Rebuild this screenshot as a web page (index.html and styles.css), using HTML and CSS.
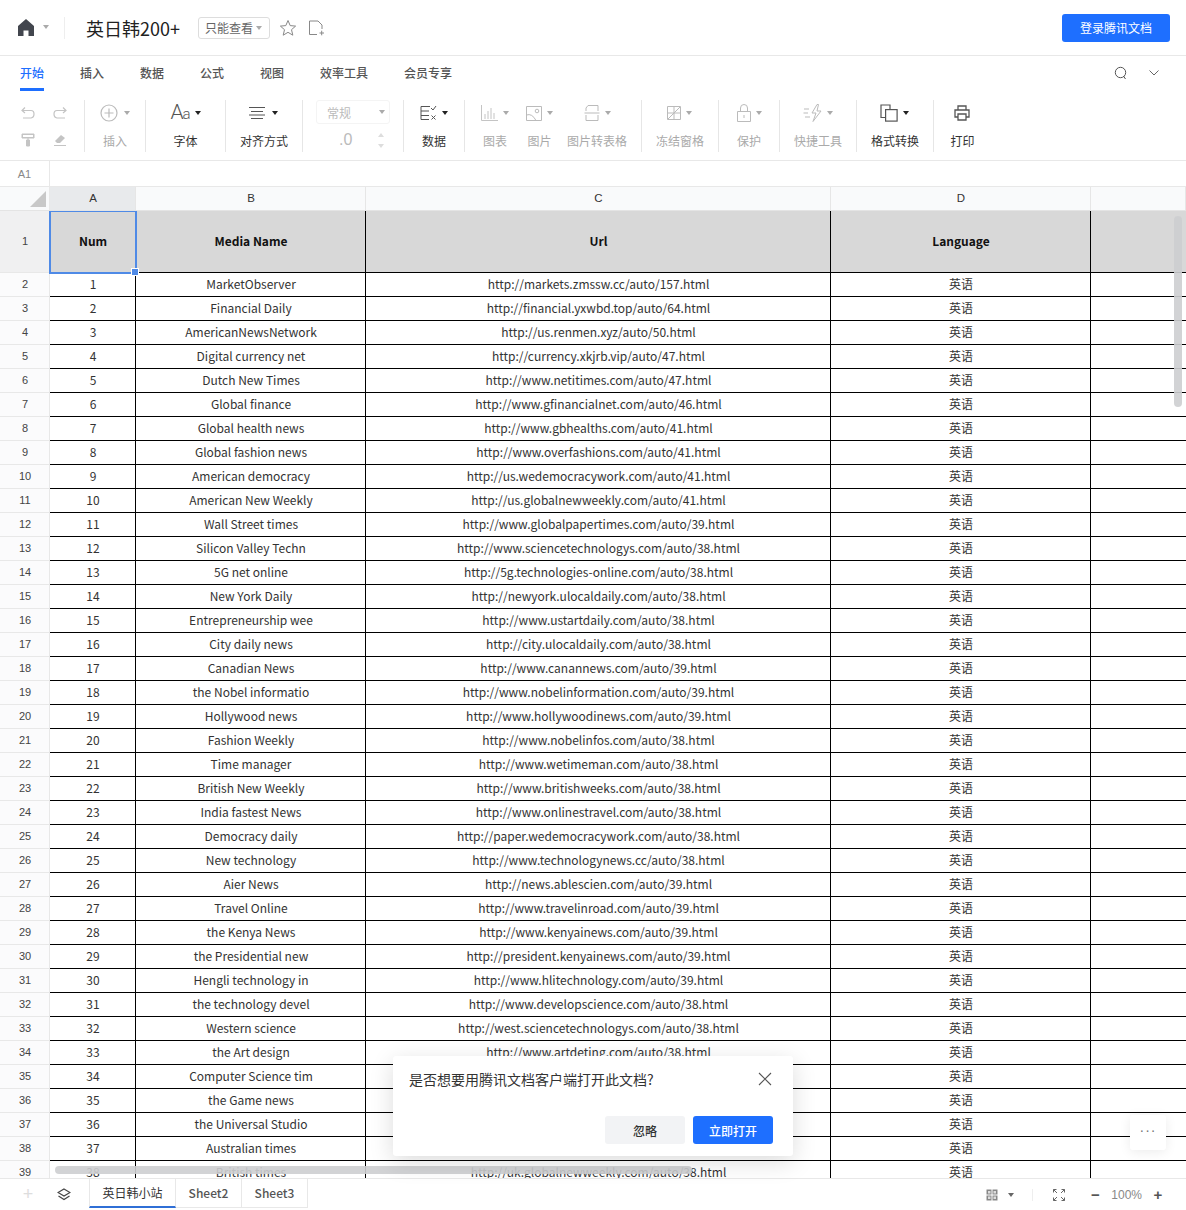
FILE: index.html
```html
<!DOCTYPE html>
<html lang="zh">
<head>
<meta charset="utf-8">
<title>英日韩200+</title>
<link rel="stylesheet" href="styles.css">
</head>
<body>
<div class="app">
  <header class="topbar">
    <svg class="home" width="16" height="17" viewBox="0 0 16 17"><path d="M8 0 L16 7 V17 H10.5 V11.5 H5.5 V17 H0 V7 Z" fill="#42464e"/></svg>
    <span class="caret caret-grey home-caret"></span>
    <span class="vsep"></span>
    <h1 class="title">英日韩200+</h1>
    <span class="badge">只能查看<span class="caret caret-grey"></span></span>
    <svg class="star" width="18" height="18" viewBox="0 0 18 18"><path d="M9 1.5 L11.2 6.6 L16.6 7.1 L12.5 10.7 L13.8 16.2 L9 13.3 L4.2 16.2 L5.5 10.7 L1.4 7.1 L6.8 6.6 Z" fill="none" stroke="#888" stroke-width="1"/></svg>
    <svg class="doc" width="17" height="16" viewBox="0 0 17 16"><path d="M9 14.5 H1.5 V1 H10 L14 5 V9 M11.5 13 H16 M13.7 10.7 V15.3" fill="none" stroke="#888" stroke-width="1"/></svg>
    <button class="login">登录腾讯文档</button>
  </header>

  <nav class="tabs">
    <span class="tab active">开始</span>
    <span class="tab">插入</span>
    <span class="tab">数据</span>
    <span class="tab">公式</span>
    <span class="tab">视图</span>
    <span class="tab">效率工具</span>
    <span class="tab">会员专享</span>
    <span class="tabs-right">
      <svg width="14" height="14" viewBox="0 0 14 14"><circle cx="6.5" cy="6.5" r="5.2" fill="none" stroke="#555" stroke-width="1"/><path d="M9.5 10 L11.5 13" stroke="#555" stroke-width="1"/></svg>
      <svg width="10" height="6" viewBox="0 0 10 6"><path d="M.5 .5 L5 5 L9.5 .5" fill="none" stroke="#666" stroke-width="1"/></svg>
    </span>
  </nav>

  <section class="toolbar">
    <div class="grp g-history">
      <svg width="14" height="12" viewBox="0 0 14 12"><path d="M4 .5 L1 3.5 L4 6 M1 3.5 H10 Q13 3.5 13 7 T10 11 H2" fill="none" stroke="#c4c4c4" stroke-width="1.2"/></svg>
      <svg width="14" height="12" viewBox="0 0 14 12"><path d="M10 .5 L13 3.5 L10 6 M13 3.5 H4 Q1 3.5 1 7 T4 11 H12" fill="none" stroke="#c4c4c4" stroke-width="1.2"/></svg>
      <svg width="14" height="14" viewBox="0 0 14 14"><path d="M1 1 H13 V5 H1 Z M7 5 V7 M5.5 7 H8.500 V13 H5.500 Z" fill="#c4c4c4" stroke="#c4c4c4"/><rect x="2" y="2" width="10" height="2" fill="#fff"/></svg>
      <svg width="14" height="14" viewBox="0 0 14 14"><path d="M2 8 L8 2 L12 5 L7 10 H4 Z" fill="#c4c4c4"/><path d="M1 12.500 H13" stroke="#c4c4c4"/></svg>
    </div>
    <div class="grp g-insert">
      <div class="tool off">
        <div class="ico gap6"><svg width="18" height="18" viewBox="0 0 18 18"><circle cx="9" cy="9" r="8" fill="none" stroke="#bbb" stroke-width="1.200"/><path d="M9 4.500 V13.500 M4.500 9 H13.500" stroke="#bbb" stroke-width="1.200"/></svg><span class="caret caret-grey"></span></div>
        <div class="lbl">插入</div>
      </div>
    </div>
    <div class="grp g-font">
      <div class="tool">
        <div class="ico"><span class="aa">A<small>a</small></span><span class="caret caret-dark"></span></div>
        <div class="lbl">字体</div>
      </div>
    </div>
    <div class="grp g-align">
      <div class="tool">
        <div class="ico gap7"><svg width="16" height="14" viewBox="0 0 16 14"><path d="M0 1.500 H16 M2 5.500 H14 M0 9 H16 M2 12.500 H14" stroke="#555" stroke-width="1"/></svg><span class="caret caret-dark"></span></div>
        <div class="lbl">对齐方式</div>
      </div>
    </div>
    <div class="grp g-format">
      <div class="select">常规<span class="caret caret-grey"></span></div>
      <div class="decimal"><span class="dot0">.0</span><span class="stepper"><i></i><i></i></span></div>
    </div>
    <div class="grp g-data">
      <div class="tool">
        <div class="ico"><svg width="17" height="16" viewBox="0 0 17 16"><path d="M10 1.500 H1 V14.500 H9 M1 6 H9 M1 10.500 H9" fill="none" stroke="#555" stroke-width="1"/><path d="M11 3 L13 5 L16 1 M11.500 10.500 L15.500 14.500 M15.500 10.500 L11.500 14.500" fill="none" stroke="#555" stroke-width="1"/></svg><span class="caret caret-dark"></span></div>
        <div class="lbl">数据</div>
      </div>
    </div>
    <div class="grp g-media">
      <div class="tool off">
        <div class="ico"><svg width="17" height="16" viewBox="0 0 17 16"><path d="M.5 0 V15.500 H17 M4 14 V9 M7 14 V6 M10 14 V3 M13 14 V8" fill="none" stroke="#c4c4c4" stroke-width="1"/></svg><span class="caret caret-grey"></span></div>
        <div class="lbl">图表</div>
      </div>
      <div class="tool off">
        <div class="ico"><svg width="16" height="15" viewBox="0 0 16 15"><path d="M.5 .5 H15.500 V14.500 H.5 Z M.5 9 Q6 7 10 14.500" fill="none" stroke="#bbb" stroke-width="1"/><circle cx="11" cy="5" r="1.800" fill="none" stroke="#bbb"/></svg><span class="caret caret-grey"></span></div>
        <div class="lbl">图片</div>
      </div>
      <div class="tool off tight">
        <div class="ico"><svg width="16" height="16" viewBox="0 0 16 16"><path d="M2 6 V3 L4 .5 H14 V6 M.5 8 H15.500 M2 10 V15.500 H14 V10" fill="none" stroke="#bbb" stroke-width="1"/></svg><span class="caret caret-grey"></span></div>
        <div class="lbl">图片转表格</div>
      </div>
    </div>
    <div class="grp g-freeze">
      <div class="tool off">
        <div class="ico"><svg width="14" height="14" viewBox="0 0 14 14"><path d="M.5 .5 H13.500 V13.500 H.5 Z M7 .5 V13.500 M.5 7 H13.500 M1 13 L13 1" fill="none" stroke="#bbb" stroke-width="1"/></svg><span class="caret caret-grey"></span></div>
        <div class="lbl">冻结窗格</div>
      </div>
    </div>
    <div class="grp g-protect">
      <div class="tool off">
        <div class="ico"><svg width="14" height="18" viewBox="0 0 14 18"><path d="M.5 7.500 H13.500 V17.500 H.5 Z M3.500 7.500 V4 Q3.500 .5 7 .5 T10.500 4 V7.500 M7 11 V14" fill="none" stroke="#bbb" stroke-width="1"/></svg><span class="caret caret-grey"></span></div>
        <div class="lbl">保护</div>
      </div>
    </div>
    <div class="grp g-quick">
      <div class="tool off">
        <div class="ico"><svg width="19" height="18" viewBox="0 0 19 18"><path d="M14 .5 L9 9 H13 L10 17.500 L18 7 H14 L15.500 .5 Z M1 5 H6 M.5 9 H5 M2 13 H7" fill="none" stroke="#bbb" stroke-width="1"/></svg><span class="caret caret-grey"></span></div>
        <div class="lbl">快捷工具</div>
      </div>
    </div>
    <div class="grp g-convert">
      <div class="tool">
        <div class="ico"><svg width="18" height="18" viewBox="0 0 18 18"><path d="M5.500 13.500 H1 V1 H10 V5.500" fill="none" stroke="#555" stroke-width="1.200"/><rect x="5.600" y="5.600" width="11.500" height="11.500" fill="none" stroke="#555" stroke-width="1.200"/></svg><span class="caret caret-dark"></span></div>
        <div class="lbl">格式转换</div>
      </div>
    </div>
    <div class="grp g-print">
      <div class="tool">
        <div class="ico"><svg width="16" height="16" viewBox="0 0 16 16"><path d="M4 5 V1 H12 V5 M4 12 H1 V5 H15 V12 H12 M4 9 H12 V15 H4 Z" fill="none" stroke="#555" stroke-width="1.300"/></svg></div>
        <div class="lbl">打印</div>
      </div>
    </div>
  </section>

  <div class="formula"><span class="cellref">A1</span></div>

  <main class="sheet">
    <div class="colhead">
      <div class="corner"><span class="tri"></span></div>
      <div class="ch sel">A</div><div class="ch">B</div><div class="ch">C</div><div class="ch">D</div><div class="ch"></div>
    </div>
    <div class="body">
      <div class="row head"><div class="rh sel">1</div><div>Num</div><div>Media Name</div><div>Url</div><div>Language</div><div></div></div>
      <div class="row"><div class="rh">2</div><div>1</div><div>MarketObserver</div><div>http://markets.zmssw.cc/auto/157.html</div><div>英语</div><div></div></div>
      <div class="row"><div class="rh">3</div><div>2</div><div>Financial Daily</div><div>http://financial.yxwbd.top/auto/64.html</div><div>英语</div><div></div></div>
      <div class="row"><div class="rh">4</div><div>3</div><div>AmericanNewsNetwork</div><div>http://us.renmen.xyz/auto/50.html</div><div>英语</div><div></div></div>
      <div class="row"><div class="rh">5</div><div>4</div><div>Digital currency net</div><div>http://currency.xkjrb.vip/auto/47.html</div><div>英语</div><div></div></div>
      <div class="row"><div class="rh">6</div><div>5</div><div>Dutch New Times</div><div>http://www.netitimes.com/auto/47.html</div><div>英语</div><div></div></div>
      <div class="row"><div class="rh">7</div><div>6</div><div>Global finance</div><div>http://www.gfinancialnet.com/auto/46.html</div><div>英语</div><div></div></div>
      <div class="row"><div class="rh">8</div><div>7</div><div>Global health news</div><div>http://www.gbhealths.com/auto/41.html</div><div>英语</div><div></div></div>
      <div class="row"><div class="rh">9</div><div>8</div><div>Global fashion news</div><div>http://www.overfashions.com/auto/41.html</div><div>英语</div><div></div></div>
      <div class="row"><div class="rh">10</div><div>9</div><div>American democracy</div><div>http://us.wedemocracywork.com/auto/41.html</div><div>英语</div><div></div></div>
      <div class="row"><div class="rh">11</div><div>10</div><div>American New Weekly</div><div>http://us.globalnewweekly.com/auto/41.html</div><div>英语</div><div></div></div>
      <div class="row"><div class="rh">12</div><div>11</div><div>Wall Street times</div><div>http://www.globalpapertimes.com/auto/39.html</div><div>英语</div><div></div></div>
      <div class="row"><div class="rh">13</div><div>12</div><div>Silicon Valley Techn</div><div>http://www.sciencetechnologys.com/auto/38.html</div><div>英语</div><div></div></div>
      <div class="row"><div class="rh">14</div><div>13</div><div>5G net online</div><div>http://5g.technologies-online.com/auto/38.html</div><div>英语</div><div></div></div>
      <div class="row"><div class="rh">15</div><div>14</div><div>New York Daily</div><div>http://newyork.ulocaldaily.com/auto/38.html</div><div>英语</div><div></div></div>
      <div class="row"><div class="rh">16</div><div>15</div><div>Entrepreneurship wee</div><div>http://www.ustartdaily.com/auto/38.html</div><div>英语</div><div></div></div>
      <div class="row"><div class="rh">17</div><div>16</div><div>City daily news</div><div>http://city.ulocaldaily.com/auto/38.html</div><div>英语</div><div></div></div>
      <div class="row"><div class="rh">18</div><div>17</div><div>Canadian News</div><div>http://www.canannews.com/auto/39.html</div><div>英语</div><div></div></div>
      <div class="row"><div class="rh">19</div><div>18</div><div>the Nobel informatio</div><div>http://www.nobelinformation.com/auto/39.html</div><div>英语</div><div></div></div>
      <div class="row"><div class="rh">20</div><div>19</div><div>Hollywood news</div><div>http://www.hollywoodinews.com/auto/39.html</div><div>英语</div><div></div></div>
      <div class="row"><div class="rh">21</div><div>20</div><div>Fashion Weekly</div><div>http://www.nobelinfos.com/auto/38.html</div><div>英语</div><div></div></div>
      <div class="row"><div class="rh">22</div><div>21</div><div>Time manager</div><div>http://www.wetimeman.com/auto/38.html</div><div>英语</div><div></div></div>
      <div class="row"><div class="rh">23</div><div>22</div><div>British New Weekly</div><div>http://www.britishweeks.com/auto/38.html</div><div>英语</div><div></div></div>
      <div class="row"><div class="rh">24</div><div>23</div><div>India fastest News</div><div>http://www.onlinestravel.com/auto/38.html</div><div>英语</div><div></div></div>
      <div class="row"><div class="rh">25</div><div>24</div><div>Democracy daily</div><div>http://paper.wedemocracywork.com/auto/38.html</div><div>英语</div><div></div></div>
      <div class="row"><div class="rh">26</div><div>25</div><div>New technology</div><div>http://www.technologynews.cc/auto/38.html</div><div>英语</div><div></div></div>
      <div class="row"><div class="rh">27</div><div>26</div><div>Aier News</div><div>http://news.ablescien.com/auto/39.html</div><div>英语</div><div></div></div>
      <div class="row"><div class="rh">28</div><div>27</div><div>Travel Online</div><div>http://www.travelinroad.com/auto/39.html</div><div>英语</div><div></div></div>
      <div class="row"><div class="rh">29</div><div>28</div><div>the Kenya News</div><div>http://www.kenyainews.com/auto/39.html</div><div>英语</div><div></div></div>
      <div class="row"><div class="rh">30</div><div>29</div><div>the Presidential new</div><div>http://president.kenyainews.com/auto/39.html</div><div>英语</div><div></div></div>
      <div class="row"><div class="rh">31</div><div>30</div><div>Hengli technology in</div><div>http://www.hlitechnology.com/auto/39.html</div><div>英语</div><div></div></div>
      <div class="row"><div class="rh">32</div><div>31</div><div>the technology devel</div><div>http://www.developscience.com/auto/38.html</div><div>英语</div><div></div></div>
      <div class="row"><div class="rh">33</div><div>32</div><div>Western science</div><div>http://west.sciencetechnologys.com/auto/38.html</div><div>英语</div><div></div></div>
      <div class="row"><div class="rh">34</div><div>33</div><div>the Art design</div><div>http://www.artdeting.com/auto/38.html</div><div>英语</div><div></div></div>
      <div class="row"><div class="rh">35</div><div>34</div><div>Computer Science tim</div><div></div><div>英语</div><div></div></div>
      <div class="row"><div class="rh">36</div><div>35</div><div>the Game news</div><div></div><div>英语</div><div></div></div>
      <div class="row"><div class="rh">37</div><div>36</div><div>the Universal Studio</div><div></div><div>英语</div><div></div></div>
      <div class="row"><div class="rh">38</div><div>37</div><div>Australian times</div><div></div><div>英语</div><div></div></div>
      <div class="row"><div class="rh">39</div><div>38</div><div>British times</div><div>http://uk.globalnewweekly.com/auto/38.html</div><div>英语</div><div></div></div>
      <span class="selection"><i class="handle"></i></span>
      <span class="vscroll"></span>
      <span class="hscroll"></span>
    </div>
  </main>

  <footer class="bottom">
    <span class="add">+</span>
    <svg class="layers" width="14" height="13" viewBox="0 0 14 13"><path d="M7 1 L13 4.500 L7 8 L1 4.500 Z M1.500 8 L7 11.500 L12.500 8" fill="none" stroke="#444" stroke-width="1.200"/></svg>
    <div class="sheets">
      <span class="stab on">英日韩小站</span>
      <span class="stab">Sheet2</span>
      <span class="stab">Sheet3</span>
    </div>
    <div class="bright">
      <svg width="12" height="12" viewBox="0 0 12 12"><path d="M.5 .5 H11.500 V11.500 H.5 Z" fill="#888"/><path d="M6 0 V12 M0 6 H12" stroke="#fff" stroke-width="1"/><path d="M2 2 H4.500 V4.500 H2 Z M7.500 2 H10 V4.500 H7.500 Z M2 7.500 H4.500 V10 H2 Z M7.500 7.500 H10 V10 H7.500 Z" fill="#ddd"/></svg>
      <span class="caret caret-dim"></span>
      <span class="bsep"></span>
      <svg class="full" width="12" height="12" viewBox="0 0 12 12"><path d="M.5 3.500 V.5 H3.500 M.5 .5 L4 4 M8.500 .5 H11.500 V3.500 M11.500 .5 L8 4 M.5 8.500 V11.500 H3.500 M.5 11.500 L4 8 M8.500 11.500 H11.500 V8.500 M11.500 11.500 L8 8" fill="none" stroke="#666" stroke-width="1"/></svg>
      <span class="zm">−</span>
      <span class="pct">100%</span>
      <span class="zm">+</span>
    </div>
  </footer>

  <aside class="dialog">
    <div class="dlg-top">
      <span>是否想要用腾讯文档客户端打开此文档?</span>
      <svg width="14" height="14" viewBox="0 0 14 14"><path d="M1 1 L13 13 M13 1 L1 13" stroke="#555" stroke-width="1.100"/></svg>
    </div>
    <div class="dlg-actions">
      <button class="btn ghost">忽略</button>
      <button class="btn primary">立即打开</button>
    </div>
  </aside>
  <div class="more">···</div>
</div>
</body>
</html>
```
FILE: styles.css
```css
* { box-sizing: border-box; }
html, body { margin: 0; padding: 0; background: #fff; }
body { font-family: "Noto Sans CJK SC", "Noto Sans", sans-serif; color: #333; }
.app { position: relative; width: 1186px; height: 1210px; overflow: hidden; display: flex; flex-direction: column; }

.caret { display: inline-block; width: 0; height: 0; border-left: 3px solid transparent; border-right: 3px solid transparent; border-top: 4px solid #999; }
.caret-grey { border-top-color: #aaa; }
.caret-dark { border-top-color: #222; }
.caret-dim { border-top-color: #666; }

.topbar { height: 56px; flex: none; display: flex; align-items: center; padding-left: 18px; border-bottom: 1px solid #e8e8e8; }
.home-caret { margin-left: 9px; margin-top: -1px; }
.vsep { width: 1px; height: 22px; background: #eee; margin-left: 15px; }
.title { margin: 0 0 0 21px; font-size: 18px; font-weight: 400; color: #222; width: 112px; line-height: 24px; white-space: nowrap; }
.badge { width: 72px; height: 22px; border: 1px solid #ddd; border-radius: 3px; font-size: 12px; color: #666; display: flex; align-items: center; padding-left: 6px; gap: 3px; }
.star { margin-left: 9px; }
.doc { margin-left: 11px; }
.login { margin-left: auto; margin-right: 16px; width: 108px; height: 28px; border: 0; border-radius: 3px; background: #1e6fff; color: #fff; font: 12px "Noto Sans CJK SC", sans-serif; padding: 0; }

.tabs { height: 36px; flex: none; display: flex; align-items: center; padding: 0 27px 2px 20px; gap: 36px; }
.tab { position: relative; font-size: 12px; font-weight: 500; color: #555; line-height: 18px; }
.tab.active { color: #1e6fff; }
.tab.active::after { content: ""; position: absolute; left: 0; right: 0; top: 24px; height: 3px; background: #1e6fff; }
.tabs-right { margin-left: auto; display: flex; align-items: center; gap: 21px; }

.toolbar { height: 69px; flex: none; display: flex; align-items: flex-start; padding-top: 8px; border-bottom: 1px solid #e8e8e8; }
.grp { height: 52px; flex: none; display: flex; justify-content: center; border-right: 1px solid #e6e6e6; }
.tool { display: flex; flex-direction: column; align-items: center; flex: none; }
.ico { height: 26px; display: flex; align-items: center; gap: 5px; }
.gap6 { gap: 6px; }
.gap7 { gap: 7px; }
.lbl { height: 24px; margin-top: 2px; line-height: 26px; font-size: 12px; color: #333; white-space: nowrap; }
.off .lbl { color: #aaa; }
.g-history { width: 85px; display: grid; grid-template-columns: 32px 32px; grid-template-rows: 26px 28px; justify-content: start; padding-left: 12px; align-items: center; justify-items: center; }
.g-insert { width: 61px; }
.g-font { width: 80px; }
.g-align { width: 77px; }
.g-format { width: 101px; display: block; padding-left: 13px; }
.g-data { width: 61px; }
.g-media { width: 177px; justify-content: flex-start; gap: 17px; padding-left: 16px; }
.tight { margin-left: -3px; }
.g-freeze { width: 77px; }
.g-protect { width: 61px; }
.g-quick { width: 77px; }
.g-convert { width: 77px; }
.g-print { width: 57px; border-right: 0; }
.aa { font-family: "Roboto", sans-serif; font-size: 21px; color: #555; font-weight: 300; line-height: 22px; letter-spacing: -1px; }
.aa small { font-size: 15px; }
.select { width: 74px; height: 24px; border: 1px solid #f4f4f4; border-radius: 3px; font-size: 12px; color: #bbb; display: flex; align-items: center; justify-content: space-between; padding: 0 4px 0 10px; }
.decimal { height: 28px; display: flex; align-items: center; margin-top: 2px; }
.dot0 { font-family: "Liberation Sans", sans-serif; font-size: 16px; color: #bbb; margin-left: 23px; width: 37px; }
.stepper { display: flex; flex-direction: column; gap: 7px; margin-left: 2px; }
.stepper i { display: block; width: 0; height: 0; border-left: 3px solid transparent; border-right: 3px solid transparent; }
.stepper i:first-child { border-bottom: 4px solid #ddd; }
.stepper i:last-child { border-top: 4px solid #ddd; }

.formula { height: 26px; flex: none; border-bottom: 1px solid #e8e8e8; display: flex; }
.cellref { width: 50px; border-right: 1px solid #e8e8e8; font: 11px/26px "Liberation Sans", sans-serif; color: #888; text-align: center; }

.sheet { flex: 1; min-height: 0; display: flex; flex-direction: column; }
.colhead, .row { display: grid; grid-template-columns: 50px 86px 230px 465px 260px 95px; }
.colhead { height: 24px; flex: none; background: #f9fafb; border-bottom: 1px solid #e4e4e4; }
.corner { position: relative; border-right: 1px solid #e8e8e8; }
.tri { position: absolute; right: 3px; bottom: 3px; width: 0; height: 0; border-left: 16px solid transparent; border-bottom: 16px solid #c8c8c8; }
.ch { padding-left: 1px; border-right: 1px solid #e6e6e6; font: 11.5px/23px "Liberation Sans", sans-serif; color: #333; text-align: center; }
.ch.sel { background: #e8eaec; }
.body { position: relative; flex: 1; min-height: 0; overflow: hidden; }
.row { height: 24px; font-size: 12px; color: #333; }
.row > div { padding-left: 1px; border-right: 1px solid #000; border-bottom: 1px solid #000; text-align: center; line-height: 21px; white-space: nowrap; overflow: hidden; }
.row > div:last-child { border-right: 0; }
.row > .rh { background: #fbfbfc; border-right: 1px solid #e8e8e8; border-bottom: 1px solid #e8e8e8; font: 11px/22px "Liberation Sans", sans-serif; color: #444; }
.row.head { height: 62px; font-weight: 700; color: #111; }
.row.head > div { background: #d8d8d8; line-height: 59px; }
.row.head > .rh { background: #f0f0f1; font-weight: 400; line-height: 60px; }

.selection { position: absolute; left: 49px; top: -1px; width: 88px; height: 64px; border: 2px solid #4f8ae6; pointer-events: none; }
.handle { position: absolute; right: -4px; bottom: -4px; width: 8px; height: 8px; background: #4f8ae6; border: 1px solid #fff; }
.vscroll { position: absolute; left: 1174px; top: 5px; width: 8px; height: 191px; border-radius: 4px; background: rgba(205,206,208,.9); }
.hscroll { position: absolute; left: 55px; top: 955px; width: 637px; height: 8px; border-radius: 4px; background: rgba(205,206,208,.9); }

.bottom { height: 32px; flex: none; display: flex; align-items: flex-start; border-top: 1px solid #e8e8e8; background: #fff; position: relative; }
.add { width: 14px; margin-left: 21px; text-align: center; font: 300 18px/30px "Liberation Sans", sans-serif; color: #ddd; }
.layers { margin: 9px 0 0 22px; }
.sheets { display: flex; margin-left: 18px; }
.stab { height: 29px; width: 66px; border-right: 1px solid #e8e8e8; border-bottom: 1px solid #e8e8e8; font-size: 12px; font-weight: 500; color: #555; text-align: center; line-height: 28px; }
.stab.on { width: 87px; color: #333; font-weight: 400; border-bottom: 2px solid #2f6fd6; border-left: 1px solid #e8e8e8; }
.bright { margin-left: auto; margin-right: 23px; display: flex; align-items: center; height: 31px; }
.caret-dim { margin-left: 10px; }
.bsep { width: 1px; height: 12px; background: #eee; margin: 0 20px 0 18px; }
.zm { font: 700 15px/30px "Liberation Sans", sans-serif; color: #555; width: 10px; text-align: center; }
.full { margin-right: 25px; }
.pct { font: 12px "Liberation Sans", sans-serif; color: #888; margin: 0 11px 0 11px; }

.dialog { position: absolute; left: 393px; top: 1056px; width: 400px; height: 100px; background: #fff; border-radius: 3px; box-shadow: 0 6px 24px rgba(0,0,0,.14); padding: 13px 20px 12px 16px; display: flex; flex-direction: column; }
.dlg-top { display: flex; justify-content: space-between; align-items: center; font-size: 14px; color: #333; height: 20px; padding-right: 1px; }
.dlg-actions { display: flex; justify-content: flex-end; gap: 8px; margin-top: auto; }
.btn { width: 80px; height: 28px; border: 0; border-radius: 3px; font: 500 12px "Noto Sans CJK SC", sans-serif; padding: 0; }
.ghost { background: #f2f3f5; color: #333; }
.primary { background: #1e6fff; color: #fff; }
.more { position: absolute; left: 1130px; top: 1115px; width: 36px; height: 35px; background: #fff; border-radius: 3px; box-shadow: 0 2px 12px rgba(0,0,0,.08); color: #777; font: 14px/31px "Liberation Sans", sans-serif; text-align: center; letter-spacing: 1px; }
```
